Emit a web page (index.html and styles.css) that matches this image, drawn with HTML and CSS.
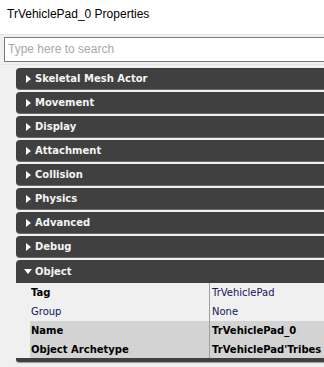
FILE: index.html
```html
<!DOCTYPE html>
<html>
<head>
<meta charset="utf-8">
<link rel="stylesheet" href="styles.css">
</head>
<body>
<div class="window">
  <div class="title">TrVehiclePad_0 Properties</div>
  <div class="searchrow">
    <div class="search">Type here to search</div>
  </div>
  <div class="list">
    <div class="hdr"><span class="tri-r"></span>Skeletal Mesh Actor</div>
    <div class="hdr"><span class="tri-r"></span>Movement</div>
    <div class="hdr"><span class="tri-r"></span>Display</div>
    <div class="hdr"><span class="tri-r"></span>Attachment</div>
    <div class="hdr"><span class="tri-r"></span>Collision</div>
    <div class="hdr"><span class="tri-r"></span>Physics</div>
    <div class="hdr"><span class="tri-r"></span>Advanced</div>
    <div class="hdr"><span class="tri-r"></span>Debug</div>
    <div class="section">
      <div class="hdr open"><span class="tri-d"></span>Object</div>
      <div class="rows">
        <div class="row"><div class="k b">Tag</div><div class="v nv">TrVehiclePad</div></div>
        <div class="row"><div class="k nv">Group</div><div class="v nv">None</div></div>
        <div class="row grey"><div class="k b">Name</div><div class="v b">TrVehiclePad_0</div></div>
        <div class="row grey last"><div class="k b">Object Archetype</div><div class="v b">TrVehiclePad'Tribes</div></div>
      </div>
      <div class="foot"></div>
    </div>
  </div>
</div>
</body>
</html>
```
FILE: styles.css
```css
html, body {
  margin: 0;
  padding: 0;
  background: #f0f0f0;
  overflow: hidden;
}
.window {
  width: 324px;
  height: 367px;
  overflow: hidden;
  font-family: "DejaVu Sans", sans-serif;
}
.title {
  height: 34px;
  box-sizing: border-box;
  background: #ffffff;
  padding: 5px 0 0 7px;
  font-family: "Liberation Sans", sans-serif;
  font-size: 12px;
  line-height: 18px;
  color: #000;
}
.searchrow {
  border-top: 1px solid #e3e3e3;
  padding: 2px 0 0 4px;
  height: 31px;
  box-sizing: border-box;
  border-bottom: 1px solid #e4e4e4;
}
.search {
  width: 400px;
  height: 25px;
  box-sizing: border-box;
  border: 1px solid #7a7a7a;
  background: #fff;
  color: #a8a8a8;
  font-family: "Liberation Sans", sans-serif;
  font-size: 12px;
  line-height: 22px;
  padding-left: 3px;
}
.list {
  padding: 3px 0 0 16px;
}
.hdr {
  width: 400px;
  height: 21px;
  box-sizing: border-box;
  background: #404040;
  border-radius: 4px 0 0 4px;
  box-shadow: 0 1px 0 #6a6a6a;
  margin-bottom: 3px;
  display: flex;
  align-items: center;
  color: #f4f4f4;
  font-weight: bold;
  font-size: 10px;
  padding-left: 10px;
  white-space: nowrap;
}
.tri-r {
  width: 0;
  height: 0;
  border-top: 4px solid transparent;
  border-bottom: 4px solid transparent;
  border-left: 5px solid #ffffff;
  margin-right: 4px;
}
.tri-d {
  width: 0;
  height: 0;
  border-left: 4px solid transparent;
  border-right: 4px solid transparent;
  border-top: 5px solid #ffffff;
  margin-right: 3px;
  margin-left: -2px;
}
.section .hdr.open {
  height: 23px;
  margin-bottom: 0;
  box-shadow: none;
  border-radius: 4px 0 0 0;
}
.rows {
  margin-left: 14px;
}
.row {
  display: flex;
  height: 19px;
  align-items: stretch;
  font-size: 10px;
  white-space: nowrap;
}
.row.last {
  height: 18px;
}
.row.grey {
  background: #d3d3d3;
}
.row .k {
  width: 180px;
  flex: none;
  box-sizing: border-box;
  padding-left: 1px;
  line-height: 19px;
  border-right: 1px solid #a0a0a0;
}
.row .v {
  padding-left: 2px;
  line-height: 19px;
}
.b {
  font-weight: bold;
  color: #000;
}
.nv {
  color: #14145a;
}
.foot {
  width: 400px;
  height: 4px;
  background: #404040;
  border-radius: 0 0 0 3px;
  box-shadow: 0 1px 1px #999;
}
```
